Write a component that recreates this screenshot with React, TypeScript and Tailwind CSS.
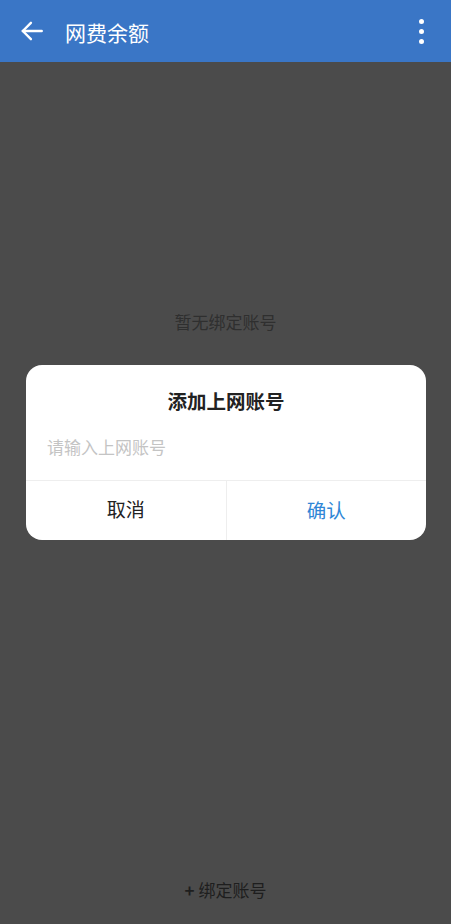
import React from "react";

export default function App() {
  return (
    <div
      className="relative w-[451px] h-[924px] bg-[#4b4b4b] flex flex-col overflow-hidden"
      style={{ fontFamily: '"Noto Sans CJK SC", "Noto Sans", sans-serif' }}
    >
      <div className="h-[62px] bg-[#3a76c6] flex items-center shrink-0">
        <div className="w-[62px] flex items-center justify-center pl-[2px]">
          <svg width="26" height="26" viewBox="0 0 24 24" fill="none" stroke="white" strokeWidth="2.2" strokeLinecap="round" strokeLinejoin="round">
            <path d="M21 12H3.5" />
            <path d="M11 4.5 3.5 12l7.5 7.5" />
          </svg>
        </div>
        <div className="text-white text-[21px] leading-none ml-[3px] flex-1 pt-[2px]">网费余额</div>
        <div className="w-[40px] flex flex-col items-center gap-[5px] mr-[10px]">
          <div className="w-[5px] h-[5px] rounded-full bg-white" />
          <div className="w-[5px] h-[5px] rounded-full bg-white" />
          <div className="w-[5px] h-[5px] rounded-full bg-white" />
        </div>
      </div>
      <div className="flex-1 flex flex-col items-center">
        <div className="mt-[251px] text-[17px] text-[#2f2f2f] leading-none">暂无绑定账号</div>
        <div className="flex-1" />
        <div className="mb-[26px] text-[17px] text-[#1e1e1e] leading-none flex items-center gap-[4px]">
          <span className="font-bold">+</span>
          <span>绑定账号</span>
        </div>
      </div>
      <div className="absolute left-[26px] top-[365px] w-[400px] h-[175px] bg-white rounded-[16px] flex flex-col overflow-hidden">
        <div className="h-[70px] flex items-center justify-center text-[19.5px] font-bold text-[#222] pt-[2px]">添加上网账号</div>
        <div className="h-[45px] flex items-start px-[21px] text-[17px] text-[#c4c4c4] leading-none pt-[3px]">请输入上网账号</div>
        <div className="flex-1 border-t border-[#eeeeee] flex">
          <div className="flex-1 flex items-center justify-center text-[19px] text-[#222] border-r border-[#eeeeee] pb-[2px]">取消</div>
          <div className="flex-1 flex items-center justify-center text-[19.5px] text-[#2f86d6] pb-[2px]">确认</div>
        </div>
      </div>
    </div>
  );
}
